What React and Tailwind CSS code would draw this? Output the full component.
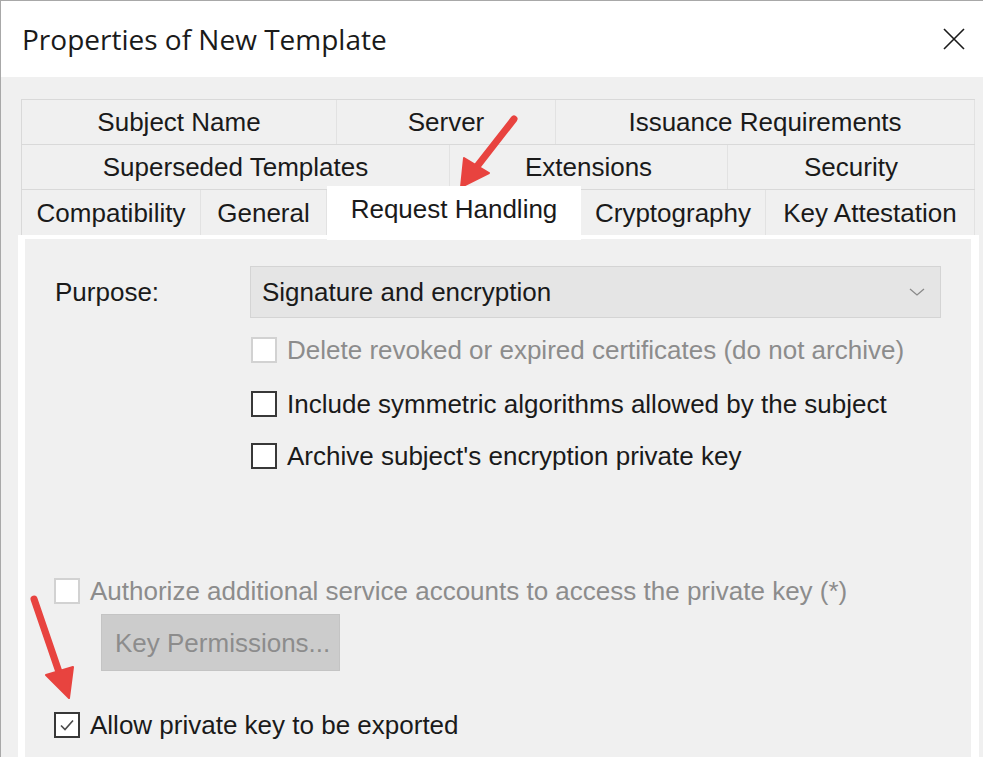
import React from 'react';

const FONT = { fontFamily: '"Liberation Sans", Arial, sans-serif' };

const ROWS = [
  [
    { label: 'Subject Name', w: 'w-[315px]' },
    { label: 'Server', w: 'w-[219px]' },
    { label: 'Issuance Requirements', w: 'w-[419px]' },
  ],
  [
    { label: 'Superseded Templates', w: 'w-[428px]' },
    { label: 'Extensions', w: 'w-[278px]' },
    { label: 'Security', w: 'w-[247px]' },
  ],
];

const FRONT_ROW = [
  { label: 'Compatibility', w: 'w-[179px]' },
  { label: 'General', w: 'w-[126px]' },
  { label: 'Request Handling', w: 'w-[254px]', active: true },
  { label: 'Cryptography', w: 'w-[185px]' },
  { label: 'Key Attestation', w: 'w-[209px]' },
];

function Checkbox({ checked, disabled }) {
  return (
    <span
      className={
        'w-[26px] h-[26px] shrink-0 bg-white flex items-center justify-center border-2 ' +
        (disabled ? 'border-[#d2d2d2]' : 'border-[#383838]')
      }
    >
      {checked && (
        <svg width="18" height="18" viewBox="0 0 18 18">
          <path d="M3 9.5 L7 13.5 L15 4.5" fill="none" stroke="#4a4a4a" strokeWidth="1.6" />
        </svg>
      )}
    </span>
  );
}

function CheckRow({ label, checked, disabled, className }) {
  return (
    <div className={'flex items-center gap-[10px] h-[26px] ' + (className || '')}>
      <Checkbox checked={checked} disabled={disabled} />
      <span className={'text-[26px] leading-none whitespace-nowrap ' + (disabled ? 'text-[#8c8c8c]' : 'text-[#1a1a1a]')}>
        {label}
      </span>
    </div>
  );
}

export default function App() {
  return (
    <div
      className="relative w-[983px] h-[757px] overflow-hidden bg-[#f0f0f0] border-t border-l border-[#a8a8a8]"
      style={FONT}
    >
      {/* Title bar */}
      <div className="h-[76px] bg-white flex items-center justify-between pl-[21px] pr-[17px]">
        <span
          className="text-[28px] text-[#1a1a1a] leading-none"
          style={{ fontFamily: '"Open Sans", "Noto Sans", sans-serif' }}
        >
          Properties of New Template
        </span>
        <svg width="24" height="24" viewBox="0 0 24 24">
          <path d="M2 2 L22 22 M22 2 L2 22" stroke="#1a1a1a" strokeWidth="1.6" />
        </svg>
      </div>

      {/* Tab strip */}
      <div className="ml-[20px] mt-[22px] w-[954px] text-[26px] text-[#1a1a1a]">
        {ROWS.map((row, i) => (
          <div key={i} className="flex h-[45px] border-t border-l border-[#d9d9d9]">
            {row.map((t) => (
              <div key={t.label} className={t.w + ' border-r border-[#e2e2e2] flex items-center justify-center leading-none'}>
                {t.label}
              </div>
            ))}
          </div>
        ))}
        <div className="flex h-[46px] border-t border-l border-[#d9d9d9] relative">
          {FRONT_ROW.map((t) =>
            t.active ? (
              <div
                key={t.label}
                className={t.w + ' relative z-10 -mt-[4px] h-[54px] bg-white flex items-start justify-center pt-[10px] leading-none'}
              >
                {t.label}
              </div>
            ) : (
              <div key={t.label} className={t.w + ' border-r border-[#e2e2e2] flex items-center justify-center leading-none'}>
                {t.label}
              </div>
            )
          )}
        </div>
      </div>

      {/* Tab page */}
      <div className="ml-[17px] w-[961px] h-[600px] border-t-[4px] border-l-[7px] border-r-[8px] border-white bg-[#f0f0f0] pl-[30px] pt-[27px]">
        <div className="flex items-center">
          <span className="w-[195px] text-[26px] text-[#1a1a1a] leading-none">Purpose:</span>
          <div className="w-[691px] h-[52px] bg-[#e5e5e5] border border-[#d4d4d4] flex items-center justify-between pl-[11px] pr-[15px]">
            <span className="text-[26px] text-[#1a1a1a] leading-none">Signature and encryption</span>
            <svg width="16" height="10" viewBox="0 0 16 10">
              <path d="M1 2 L8 8 L15 2" fill="none" stroke="#8a8a8a" strokeWidth="1.3" />
            </svg>
          </div>
        </div>

        <div className="ml-[196px]">
          <CheckRow className="mt-[19px]" disabled label="Delete revoked or expired certificates (do not archive)" />
          <CheckRow className="mt-[28px]" label="Include symmetric algorithms allowed by the subject" />
          <CheckRow className="mt-[26px]" label="Archive subject's encryption private key" />
        </div>

        <CheckRow className="mt-[109px] -ml-[1px]" disabled label="Authorize additional service accounts to access the private key (*)" />
        <div className="mt-[10px] ml-[46px] w-[239px] h-[57px] bg-[#cccccc] border border-[#c4c4c4] flex items-center pl-[13px]">
          <span className="text-[26px] text-[#8c8c8c] leading-none">Key Permissions...</span>
        </div>
        <CheckRow className="mt-[41px] -ml-[1px]" checked label="Allow private key to be exported" />
      </div>

      {/* Annotation arrows */}
      <svg className="absolute inset-0 pointer-events-none" width="983" height="757" viewBox="0 0 983 757">
        <g fill="#e8433f" stroke="#e8433f" strokeLinecap="round" strokeLinejoin="round">
          <line x1="513" y1="118" x2="474" y2="168" strokeWidth="7" />
          <polygon points="460,186 463,157 488,172" strokeWidth="2" />
          <line x1="33" y1="598" x2="58" y2="671" strokeWidth="7" />
          <polygon points="68,697 45,674 72,666" strokeWidth="2" />
        </g>
      </svg>
    </div>
  );
}
